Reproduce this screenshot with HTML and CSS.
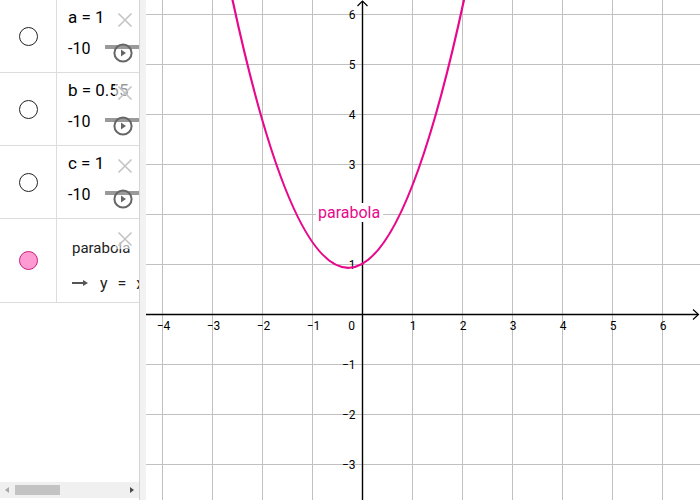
FILE: index.html
```html
<!DOCTYPE html>
<html>
<head>
<meta charset="utf-8">
<title>GeoGebra parabola</title>
<link rel="stylesheet" href="styles.css">
</head>
<body>
<div class="app">
  <aside class="algebra">
    <div class="rows">
      <div class="row">
        <div class="marble-cell"><span class="marble"></span></div>
        <div class="item">
          <div class="def">a = 1</div>
          <div class="slider-line"><span class="min">-10</span><span class="track"></span></div>
          <span class="del"><svg width="16" height="16" viewBox="0 0 16 16"><path class="x-stroke" d="M1.5 1.5L14.5 14.5M14.5 1.5L1.5 14.5"/></svg></span>
          <span class="play"><svg width="20" height="20" viewBox="0 0 20 20"><circle class="play-ring" cx="10" cy="10" r="8.6"/><path class="play-tri" d="M8 6.5L13 10L8 13.5Z"/></svg></span>
        </div>
      </div>
      <div class="row">
        <div class="marble-cell"><span class="marble"></span></div>
        <div class="item">
          <div class="def">b = 0.55</div>
          <div class="slider-line"><span class="min">-10</span><span class="track"></span></div>
          <span class="del"><svg width="16" height="16" viewBox="0 0 16 16"><path class="x-stroke" d="M1.5 1.5L14.5 14.5M14.5 1.5L1.5 14.5"/></svg></span>
          <span class="play"><svg width="20" height="20" viewBox="0 0 20 20"><circle class="play-ring" cx="10" cy="10" r="8.6"/><path class="play-tri" d="M8 6.5L13 10L8 13.5Z"/></svg></span>
        </div>
      </div>
      <div class="row">
        <div class="marble-cell"><span class="marble"></span></div>
        <div class="item">
          <div class="def">c = 1</div>
          <div class="slider-line"><span class="min">-10</span><span class="track"></span></div>
          <span class="del"><svg width="16" height="16" viewBox="0 0 16 16"><path class="x-stroke" d="M1.5 1.5L14.5 14.5M14.5 1.5L1.5 14.5"/></svg></span>
          <span class="play"><svg width="20" height="20" viewBox="0 0 20 20"><circle class="play-ring" cx="10" cy="10" r="8.6"/><path class="play-tri" d="M8 6.5L13 10L8 13.5Z"/></svg></span>
        </div>
      </div>
      <div class="row fn">
        <div class="marble-cell"><span class="marble pink"></span></div>
        <div class="item fn-item">
          <div class="fn-name">parabola</div>
          <div class="fn-line">
            <svg class="fn-arrow" width="16" height="8" viewBox="0 0 16 8"><path class="arrow-shaft" d="M0 4H12"/><path class="arrow-head" d="M11 1L16 4L11 7Z"/></svg>
            <span class="fn-expr">y = x</span>
          </div>
          <span class="del"><svg width="16" height="16" viewBox="0 0 16 16"><path class="x-stroke" d="M1.5 1.5L14.5 14.5M14.5 1.5L1.5 14.5"/></svg></span>
        </div>
      </div>
    </div>
    <div class="hscroll">
      <span class="sb-left"></span>
      <span class="sb-thumb"></span>
      <span class="sb-fill"></span>
      <span class="sb-right"></span>
    </div>
  </aside>
  <div class="splitter"></div>
  <main class="graphics">
    <svg class="plot" width="554" height="500" viewBox="146 0 554 500">
      <path class="grid" d="M162.5 0V500M212.5 0V500M262.5 0V500M312.5 0V500M412.5 0V500M462.5 0V500M512.5 0V500M562.5 0V500M612.5 0V500M662.5 0V500M146 14.5H700M146 64.5H700M146 114.5H700M146 164.5H700M146 214.5H700M146 264.5H700M146 364.5H700M146 414.5H700M146 464.5H700"/>
      <path class="axis" d="M146 314.5H698M362.5 500V1"/>
      <path class="axis-arrow" d="M693 309.5L698.5 314.5L693 319.5M357.5 6L362.5 1L367.5 6"/>
      <g class="xlabels">
        <text x="163.5" y="330">−4</text>
        <text x="213.5" y="330">−3</text>
        <text x="263.5" y="330">−2</text>
        <text x="313.5" y="330">−1</text>
        <text x="351.5" y="330">0</text>
        <text x="413" y="330">1</text>
        <text x="463" y="330">2</text>
        <text x="513" y="330">3</text>
        <text x="563" y="330">4</text>
        <text x="613" y="330">5</text>
        <text x="663" y="330">6</text>
      </g>
      <g class="ylabels">
        <text x="355.5" y="19">6</text>
        <text x="355.5" y="69">5</text>
        <text x="355.5" y="119">4</text>
        <text x="355.5" y="169">3</text>
        <text x="355.5" y="269">1</text>
        <text x="355.5" y="369">−1</text>
        <text x="355.5" y="419">−2</text>
        <text x="355.5" y="469">−3</text>
      </g>
      <path class="curve" d="M227 -26.25Q349.5 567.875 472 -38.5"/>
      <rect class="label-bg" x="316" y="203" width="67" height="19"/>
      <text class="curve-label" x="318" y="218">parabola</text>
    </svg>
  </main>
</div>
</body>
</html>
```
FILE: styles.css
```css
html, body {
  margin: 0;
  padding: 0;
  background: #fff;
}
body {
  font-family: Roboto, "Liberation Sans", sans-serif;
  color: #000;
}
.app {
  display: flex;
  width: 700px;
  height: 500px;
  overflow: hidden;
}
.algebra {
  width: 139px;
  flex: none;
  display: flex;
  flex-direction: column;
  overflow: hidden;
}
.rows {
  flex: 1;
}
.row {
  display: flex;
  height: 72px;
  border-bottom: 1px solid #dcdcdc;
}
.row.fn {
  height: 83px;
}
.marble-cell {
  width: 56px;
  flex: none;
  border-right: 1px solid #dcdcdc;
  display: flex;
  align-items: center;
  justify-content: center;
}
.marble {
  box-sizing: border-box;
  width: 19px;
  height: 19px;
  border-radius: 50%;
  border: 1px solid #222;
  background: #fff;
}
.marble.pink {
  background: #fd9bd2;
  border-color: #d0197f;
}
.item {
  position: relative;
  flex: 1;
  min-width: 0;
  padding: 7px 0 0 11px;
  overflow: hidden;
}
.def {
  font-size: 17px;
  line-height: 20px;
  white-space: nowrap;
}
.slider-line {
  display: flex;
  align-items: flex-start;
  height: 20px;
  margin-top: 12px;
}
.min {
  font-size: 16px;
  line-height: 20px;
  white-space: nowrap;
}
.track {
  flex: none;
  width: 60px;
  height: 4px;
  margin: 6px 0 0 15px;
  background: #9a9a9a;
}
.del {
  position: absolute;
  top: 10px;
  right: 4px;
  width: 20px;
  height: 20px;
  display: flex;
  align-items: center;
  justify-content: center;
  background: rgba(255, 255, 255, 0.6);
}
.del svg {
  display: block;
}
.x-stroke {
  stroke: #c4c4c4;
  stroke-width: 1.6;
  fill: none;
}
.play {
  position: absolute;
  top: 43px;
  right: 6px;
  width: 20px;
  height: 20px;
}
.play svg {
  display: block;
}
.play-ring {
  fill: none;
  stroke: #666;
  stroke-width: 2;
}
.play-tri {
  fill: #666;
}
.fn-item {
  padding: 19px 0 0 15px;
}
.fn-name {
  font-size: 15px;
  line-height: 20px;
  color: #222;
  white-space: nowrap;
}
.fn-line {
  display: flex;
  align-items: center;
  height: 20px;
  margin-top: 15px;
  white-space: nowrap;
}
.fn-arrow {
  display: block;
  flex: none;
}
.arrow-shaft {
  stroke: #555;
  stroke-width: 2;
  fill: none;
}
.arrow-head {
  fill: #555;
}
.fn-expr {
  margin-left: 12px;
  font-size: 16px;
  word-spacing: 6px;
  color: #222;
}
.hscroll {
  flex: none;
  height: 16px;
  margin-bottom: 2px;
  background: #f0f0f0;
  display: flex;
  align-items: center;
  padding: 0 5px;
}
.sb-left {
  width: 0;
  height: 0;
  border-top: 3.5px solid transparent;
  border-bottom: 3.5px solid transparent;
  border-right: 4px solid #a8a8a8;
}
.sb-thumb {
  width: 45px;
  height: 10px;
  margin-left: 6px;
  background: #c3c3c3;
}
.sb-fill {
  flex: 1;
}
.sb-right {
  width: 0;
  height: 0;
  border-top: 3.5px solid transparent;
  border-bottom: 3.5px solid transparent;
  border-left: 4px solid #4a4a4a;
}
.splitter {
  flex: none;
  width: 6px;
  border-left: 1px solid #d4d4d4;
  background: #f2f2f2;
}
.graphics {
  flex: none;
  width: 554px;
  height: 500px;
}
.plot {
  display: block;
}
.grid {
  stroke: #c0c0c0;
  stroke-width: 1;
  fill: none;
}
.axis {
  stroke: #000;
  stroke-width: 1.4;
  fill: none;
}
.axis-arrow {
  stroke: #000;
  stroke-width: 1.2;
  fill: none;
}
.xlabels text {
  font-family: Roboto, "Liberation Sans", sans-serif;
  font-size: 12px;
  text-anchor: middle;
  fill: #000;
}
.ylabels text {
  font-family: Roboto, "Liberation Sans", sans-serif;
  font-size: 12px;
  text-anchor: end;
  fill: #000;
}
.curve {
  fill: none;
  stroke: #e8088b;
  stroke-width: 2.2;
}
.label-bg {
  fill: #fff;
}
.curve-label {
  font-family: Roboto, "Liberation Sans", sans-serif;
  font-size: 16px;
  fill: #e8088b;
}
```
